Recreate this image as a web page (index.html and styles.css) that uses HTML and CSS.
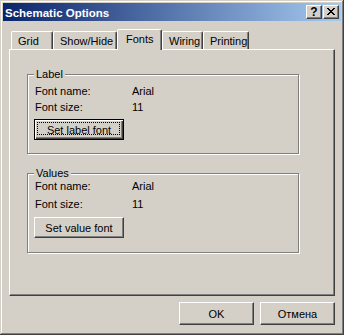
FILE: index.html
```html
<!DOCTYPE html>
<html>
<head>
<meta charset="utf-8">
<link rel="stylesheet" href="styles.css">
</head>
<body>
<div class="window">
  <div class="titlebar">
    <span class="title">Schematic Options</span>
    <div class="tb-buttons">
      <div class="tb-btn help">?</div>
      <div class="tb-btn close">
        <svg width="8" height="7" viewBox="0 0 8 7" shape-rendering="crispEdges">
          <path fill="#000" d="M0 0h2v1h-2zM6 0h2v1h-2zM1 1h2v1h-2zM5 1h2v1h-2zM2 2h4v1h-4zM3 3h2v1h-2zM2 4h4v1h-4zM1 5h2v1h-2zM5 5h2v1h-2zM0 6h2v1h-2zM6 6h2v1h-2z"/>
        </svg>
      </div>
    </div>
  </div>
  <div class="content">
    <div class="tabs">
      <div class="tab t-grid">Grid</div>
      <div class="tab t-show">Show/Hide</div>
      <div class="tab t-fonts selected">Fonts</div>
      <div class="tab t-wiring">Wiring</div>
      <div class="tab t-print">Printing</div>
    </div>
    <div class="panel">
      <div class="group group-label">
        <span class="legend">Label</span>
        <div class="row"><span class="key">Font name:</span><span>Arial</span></div>
        <div class="row"><span class="key">Font size:</span><span>11</span></div>
        <div class="btn btn-focus grp-btn">Set label font<span class="focus-ring"></span></div>
      </div>
      <div class="group group-values">
        <span class="legend">Values</span>
        <div class="row"><span class="key">Font name:</span><span>Arial</span></div>
        <div class="row"><span class="key">Font size:</span><span>11</span></div>
        <div class="btn grp-btn">Set value font</div>
      </div>
    </div>
    <div class="footer">
      <div class="btn dlg-btn">OK</div>
      <div class="btn dlg-btn">Отмена</div>
    </div>
  </div>
</div>
</body>
</html>
```
FILE: styles.css
```css
* { box-sizing: border-box; }
html, body { margin: 0; padding: 0; background: #d4d0c8; }
body {
  font-family: "Liberation Sans", Arial, sans-serif;
  font-size: 11px;
  color: #000;
}
.window {
  width: 344px;
  height: 335px;
  padding: 3px;
  background: #d4d0c8;
  box-shadow: inset -1px -1px #404040, inset 1px 1px #d4d0c8, inset -2px -2px #808080, inset 2px 2px #fff;
}
.titlebar {
  height: 18px;
  display: flex;
  align-items: flex-start;
  justify-content: space-between;
  background: linear-gradient(to right, #0a246a, #a6caf0);
  padding: 2px 2px 0 2px;
}
.title {
  color: #fff;
  font-weight: bold;
  font-size: 11.5px;
  line-height: 14px;
  padding-top: 1px;
}
.tb-buttons { display: flex; gap: 1px; }
.tb-btn {
  width: 16px;
  height: 14px;
  background: #d4d0c8;
  border: 1px solid;
  border-color: #fff #404040 #404040 #fff;
  box-shadow: inset -1px -1px #808080;
  display: flex;
  align-items: center;
  justify-content: center;
  font-weight: bold;
  font-size: 12px;
  line-height: 12px;
}
.tb-btn.close { padding: 0 1px 1px 0; }
.tb-btn.help { padding-bottom: 1px; }
.content { padding: 8px 6px 0 6px; }
.tabs {
  display: flex;
  align-items: flex-end;
  height: 20px;
  padding-left: 2px;
}
.tab {
  height: 18px;
  border-top: 1px solid #fff;
  border-left: 1px solid #fff;
  border-right: 1px solid #404040;
  border-radius: 2px 2px 0 0;
  box-shadow: inset -1px 0 #808080;
  padding: 2px 0 0 6px;
  line-height: 14px;
  white-space: nowrap;
  background: #d4d0c8;
}
.t-grid { width: 42px; }
.t-show { width: 64px; }
.t-fonts { width: 45px; }
.t-wiring { width: 41px; }
.t-print { width: 46px; }
.tab.selected {
  height: 21px;
  margin-bottom: -1px;
  position: relative;
  z-index: 1;
  padding-left: 8px;
}
.panel {
  height: 247px;
  border-top: 1px solid #fff;
  border-left: 1px solid #fff;
  border-right: 1px solid #404040;
  border-bottom: 1px solid #404040;
  box-shadow: inset -1px -1px #808080;
  padding: 24px 0 0 17px;
  display: flex;
  flex-direction: column;
}
.group {
  position: relative;
  width: 272px;
  height: 80px;
  border: 1px solid #808080;
  box-shadow: inset 1px 1px #fff, 1px 1px #fff;
  padding-left: 7px;
  display: flex;
  flex-direction: column;
  flex-shrink: 0;
}
.group-label { padding-top: 8px; }
.group-values { margin-top: 19px; padding-top: 4px; gap: 2px; }
.legend {
  position: absolute;
  left: 6px;
  top: -8px;
  padding: 0 2px;
  background: #d4d0c8;
  line-height: 14px;
}
.row { display: flex; height: 16px; line-height: 16px; }
.key { width: 97px; }
.btn {
  position: relative;
  background: #d4d0c8;
  border: 1px solid;
  border-color: #fff #404040 #404040 #fff;
  box-shadow: inset -1px -1px #808080;
  display: flex;
  align-items: center;
  justify-content: center;
  line-height: 14px;
}
.btn-focus {
  border-color: #000;
  box-shadow: inset 1px 1px #fff, inset -1px -1px #404040, inset -2px -2px #808080;
}
.focus-ring {
  position: absolute;
  left: 2px;
  top: 2px;
  right: 3px;
  bottom: 4px;
  border: 1px dotted #000;
}
.grp-btn {
  width: 90px;
  height: 21px;
  margin-left: -1px;
}
.group-label .grp-btn { margin-top: 4px; }
.group-values .grp-btn { margin-top: 3px; }
.footer {
  display: flex;
  justify-content: flex-end;
  gap: 6px;
  margin-top: 6px;
}
.dlg-btn { width: 75px; height: 23px; }
```
